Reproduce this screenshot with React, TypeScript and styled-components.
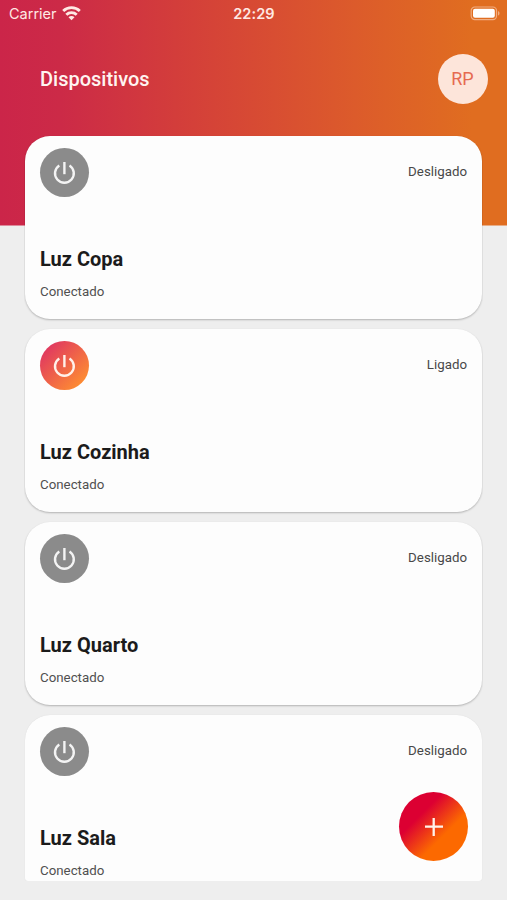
import React from "react";
import styled, { createGlobalStyle } from "styled-components";

const GlobalStyle = createGlobalStyle`
  * { box-sizing: border-box; }
  body { margin: 0; background: #eeeeee; font-family: Roboto, sans-serif; overflow: hidden; }
  h1, h2, p { margin: 0; font-weight: inherit; }
  button { border: 0; padding: 0; font: inherit; }
`;

const Screen = styled.div`
  position: relative;
  width: 507px;
  height: 900px;
  overflow: hidden;
  background: linear-gradient(90deg, #cb2549 0%, #cc2a47 12%, #d44039 38%, #dc5b2b 70%, #e06d20 93%, #e06d20 100%)
    0 0 / 100% 225.5px no-repeat #eeeeee;
`;

const StatusBar = styled.div`
  display: grid;
  grid-template-columns: 1fr auto 1fr;
  align-items: center;
  height: 26px;
  padding: 0 7px 0 9px;
  color: #ffe9e4;
  font-family: Inter, sans-serif;
  font-size: 14.5px;
`;

const Carrier = styled.div`
  display: flex;
  align-items: center;
  gap: 5px;
`;

const Clock = styled.time`
  margin-left: -1px;
  font-size: 14.5px;
  font-weight: 600;
  letter-spacing: 0.1px;
`;

const BatterySlot = styled.div`
  display: flex;
  justify-content: flex-end;
`;

const Header = styled.header`
  display: flex;
  justify-content: space-between;
  align-items: center;
  height: 104px;
  padding: 2px 19px 0 40px;
`;

const Title = styled.h1`
  color: #fff4f1;
  font-size: 20px;
  font-weight: 500;
  line-height: 24px;
`;

const Avatar = styled.div`
  display: grid;
  place-items: center;
  width: 50px;
  height: 50px;
  padding: 0 1px 1px 0;
  border-radius: 50%;
  background: #fde5da;
  color: #e66a51;
  font-size: 18px;
`;

const DeviceList = styled.main`
  display: flex;
  flex-direction: column;
  gap: 10px;
  height: 751px;
  margin: 0 24px;
  padding: 6px 1px 0;
  overflow: hidden;
`;

const Card = styled.section`
  display: flex;
  flex: 0 0 183px;
  flex-direction: column;
  padding: 12px 15px 0;
  border-radius: 25px;
  background: #fdfdfd;
  box-shadow: 0 1px 2px rgba(0, 0, 0, 0.25);

  &:last-child {
    flex-basis: 166px;
    border-radius: 25px 25px 3px 3px;
    box-shadow: 0 0 1px rgba(0, 0, 0, 0.12);
  }
`;

const CardTop = styled.div`
  display: flex;
  justify-content: space-between;
`;

const PowerButton = styled.button<{ $on: boolean }>`
  display: grid;
  place-items: center;
  width: 49px;
  height: 49px;
  border-radius: 50%;
  background: ${({ $on }) => ($on ? "linear-gradient(135deg, #df3562 10%, #ff9030 90%)" : "#8b8b8b")};
  color: ${({ $on }) => ($on ? "#fff1ea" : "#f4f4f4")};
`;

const State = styled.span`
  margin-top: 16px;
  color: #484848;
  font-size: 13.3px;
  line-height: 16px;
`;

const DeviceName = styled.h2`
  margin-top: 50px;
  color: #1b1b1b;
  font-size: 20px;
  font-weight: 700;
  line-height: 24px;
`;

const Connection = styled.p`
  margin-top: 13px;
  color: #505050;
  font-size: 13.3px;
  line-height: 16px;
`;

const AddButton = styled.button`
  position: absolute;
  top: 792px;
  left: 399px;
  display: grid;
  place-items: center;
  width: 69px;
  height: 69px;
  border-radius: 50%;
  background: linear-gradient(135deg, #dc0032 32%, #fc6900 64%);
  color: #fff3eb;
`;

const WifiIcon = () => (
  <svg width="19" height="15" viewBox="0 0 19 15" fill="none" stroke="currentColor" strokeWidth="2.9">
    <path d="M1.2 5a12 12 0 0 1 16.6 0" />
    <path d="M4.3 8.7a7.6 7.6 0 0 1 10.4 0" />
    <path d="M9.5 14.2 6.5 11.3a4.2 4.2 0 0 1 6 0Z" fill="currentColor" stroke="none" />
  </svg>
);

const BatteryIcon = () => (
  <svg width="30" height="15" viewBox="0 0 30 15">
    <rect x="1.2" y="1" width="25.3" height="12.6" rx="3.6" fill="none" stroke="#f0ad82" strokeWidth="1.2" />
    <rect x="3" y="2.8" width="21.8" height="9" rx="2" fill="#fff" />
    <path d="M28 5v4.6c2-.8 2-3.8 0-4.6Z" fill="#f0ad82" />
  </svg>
);

const PowerIcon = () => (
  <svg width="25" height="25" viewBox="0 0 25 25" fill="none" stroke="currentColor" strokeWidth="2.4">
    <path d="M12.4 2v12.2" />
    <path d="M7.3 5.4a9.4 9.4 0 1 0 10.2 0" />
  </svg>
);

const PlusIcon = () => (
  <svg width="18" height="18" viewBox="0 0 18 18" stroke="currentColor" strokeWidth="2.3">
    <path d="M8.7 0v18M0 8.7h18" />
  </svg>
);

const devices = [
  { name: "Luz Copa", on: false },
  { name: "Luz Cozinha", on: true },
  { name: "Luz Quarto", on: false },
  { name: "Luz Sala", on: false },
];

export default function App() {
  return (
    <Screen>
      <GlobalStyle />
      <StatusBar>
        <Carrier>
          Carrier
          <WifiIcon />
        </Carrier>
        <Clock>22:29</Clock>
        <BatterySlot>
          <BatteryIcon />
        </BatterySlot>
      </StatusBar>
      <Header>
        <Title>Dispositivos</Title>
        <Avatar>RP</Avatar>
      </Header>
      <DeviceList>
        {devices.map(({ name, on }) => (
          <Card key={name}>
            <CardTop>
              <PowerButton $on={on} aria-label={name}>
                <PowerIcon />
              </PowerButton>
              <State>{on ? "Ligado" : "Desligado"}</State>
            </CardTop>
            <DeviceName>{name}</DeviceName>
            <Connection>Conectado</Connection>
          </Card>
        ))}
      </DeviceList>
      <AddButton aria-label="Adicionar">
        <PlusIcon />
      </AddButton>
    </Screen>
  );
}
